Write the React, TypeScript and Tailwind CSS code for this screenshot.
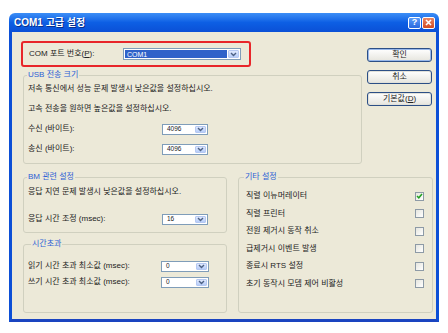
import React from "react";

function Chevron() {
  return (
    <svg width="7" height="5" viewBox="0 0 7 5">
      <path d="M1 1 L3.5 3.5 L6 1" fill="none" stroke="#4d6185" strokeWidth="1.4" />
    </svg>
  );
}

function Combo({ value, w, h = 11, selected = false }: { value: string; w: number; h?: number; selected?: boolean }) {
  return (
    <div
      className="flex items-stretch border border-[#7f9db9] bg-white p-[1px]"
      style={{ width: w, height: h }}
    >
      {selected ? (
        <span className="flex flex-1 items-center bg-[#2f62c9] pl-[2px] text-[7px] leading-none text-white">
          {value}
        </span>
      ) : (
        <span className="flex flex-1 items-center pl-[3px] text-[6.5px] leading-none text-[#222]">{value}</span>
      )}
      <span className="ml-[1px] flex w-[11px] items-center justify-center rounded-[1px] border border-[#b5c8f2] bg-linear-to-b from-[#dfe8fd] to-[#b7cdf8]">
        <Chevron />
      </span>
    </div>
  );
}

function Check({ checked = false }: { checked?: boolean }) {
  return (
    <span className="flex h-[9px] w-[9px] items-center justify-center border border-[#8d9aa6] bg-linear-to-br from-[#e6e6df] to-white">
      {checked && (
        <svg width="7" height="6" viewBox="0 0 7 6">
          <path d="M1 3 L2.8 4.8 L6 1" fill="none" stroke="#21a121" strokeWidth="1.5" />
        </svg>
      )}
    </span>
  );
}

function Btn({ children, def = false }: { children: React.ReactNode; def?: boolean }) {
  return (
    <div
      className={
        "flex h-[14px] w-[65px] items-center justify-center rounded-[3px] border border-[#2c4f86] bg-linear-to-b from-white to-[#e6e5de] text-[8px] leading-none text-[#222] " +
        (def ? "shadow-[inset_0_0_0_1px_#98b8ea]" : "shadow-[inset_0_0_0_1px_#e1e1da]")
      }
    >
      {children}
    </div>
  );
}

function Legend({ children, ml = 0 }: { children: React.ReactNode; ml?: number }) {
  return (
    <legend className="px-[1px] text-[8px] leading-[10px] text-[#2d5fd6]" style={{ marginLeft: ml }}>
      {children}
    </legend>
  );
}

export default function App() {
  return (
    <div className="h-[333px] w-[448px] overflow-hidden bg-white pl-[9px] pt-[13px] font-['Liberation_Sans','Noto_Sans_CJK_KR',sans-serif] text-[8px] text-[#222]">
      <div className="flex h-[309px] w-[430px] flex-col overflow-hidden rounded-t-[6px]">
        {/* Title bar */}
        <div className="flex h-[19px] shrink-0 items-center justify-between bg-linear-to-b from-[#3c8ef6] via-[#0d5fe4] to-[#0b50d6] pl-[5px] pr-[4px]">
          <span className="text-[10px] font-bold leading-none text-white [text-shadow:1px_1px_0_#0a2f8a]">
            COM1 고급 설정
          </span>
          <div className="flex gap-[1px]">
            <span className="flex h-[12px] w-[13px] items-center justify-center rounded-[2px] border border-white bg-linear-to-b from-[#5a9bf8] to-[#2a68e0] text-[9px] font-bold leading-none text-white">
              ?
            </span>
            <span className="flex h-[12px] w-[13px] items-center justify-center rounded-[2px] border border-white bg-linear-to-b from-[#e98463] to-[#d14a20]">
              <svg width="7" height="7" viewBox="0 0 7 7">
                <path d="M1 1 L6 6 M6 1 L1 6" stroke="white" strokeWidth="1.6" />
              </svg>
            </span>
          </div>
        </div>

        {/* Body */}
        <div className="flex flex-1 flex-col border-x-[3px] border-b-[3px] border-x-[#0c4fd6] border-b-[#1a44c0] bg-[#ece9d8] pl-[9px] pt-[9px]">
          {/* Section A */}
          <div className="flex items-start">
            <div className="flex w-[341px] flex-col">
              <div className="flex h-[26px] w-[230px] items-center rounded-[3px] border-2 border-[#e8262a] pl-[6px]">
                <span className="w-[94px]">
                  COM 포트 번호(<span className="underline">P</span>):
                </span>
                <Combo value="COM1" w={118} h={12} selected />
              </div>
              <fieldset className="ml-[2px] mt-[3px] w-[339px] rounded-[3px] border border-[#d0d0bf] pb-[8px] pl-[4px] pt-[3px]">
                <Legend ml={-1}>USB 전송 크기</Legend>
                <div className="flex flex-col gap-[8px]">
                  <div className="h-[12px] leading-[12px]">저속 통신에서 성능 문제 발생시 낮은값을 설정하십시오.</div>
                  <div className="h-[12px] leading-[12px]">고속 전송을 원하면 높은값을 설정하십시오.</div>
                  <div className="flex h-[12px] items-center">
                    <span className="w-[134px]">수신 (바이트):</span>
                    <Combo value="4096" w={46} />
                  </div>
                  <div className="flex h-[12px] items-center">
                    <span className="w-[134px]">송신 (바이트):</span>
                    <Combo value="4096" w={46} />
                  </div>
                </div>
              </fieldset>
            </div>
            <div className="ml-[5px] mt-[7px] flex flex-col gap-[8px]">
              <Btn def>확인</Btn>
              <Btn>취소</Btn>
              <Btn>
                기본값(<span className="underline">D</span>)
              </Btn>
            </div>
          </div>

          {/* Section B */}
          <div className="mt-[8px] flex h-[141px] items-stretch">
            <div className="ml-[2px] flex w-[204px] flex-col">
              <fieldset className="rounded-[3px] border border-[#d0d0bf] pb-[7px] pl-[4px] pt-[4px]">
                <Legend ml={-1}>BM 관련 설정</Legend>
                <div className="h-[12px] leading-[12px]">응답 지연 문제 발생시 낮은값을 설정하십시오.</div>
                <div className="mt-[15px] flex h-[12px] items-center">
                  <span className="w-[134px]">응답 시간 조정 (msec):</span>
                  <Combo value="16" w={46} />
                </div>
              </fieldset>
              <fieldset className="mt-[6px] flex-1 rounded-[3px] border border-[#d0d0bf] pl-[4px] pt-[11px]">
                <Legend ml={3}>시간초과</Legend>
                <div className="flex flex-col gap-[4px]">
                  <div className="flex h-[12px] items-center">
                    <span className="w-[133px]">읽기 시간 초과 최소값 (msec):</span>
                    <Combo value="0" w={48} />
                  </div>
                  <div className="flex h-[12px] items-center">
                    <span className="w-[133px]">쓰기 시간 초과 최소값 (msec):</span>
                    <Combo value="0" w={48} />
                  </div>
                </div>
              </fieldset>
            </div>
            <fieldset className="ml-[11px] w-[195px] rounded-[3px] border border-[#d0d0bf] pl-[7px] pr-[8px] pt-[8px]">
              <Legend ml={-2}>기타 설정</Legend>
              <div className="flex flex-col gap-[5.6px]">
                {[
                  ["직렬 이뉴머레이터", true],
                  ["직렬 프린터", false],
                  ["전원 제거시 동작 취소", false],
                  ["급제거시 이벤트 발생", false],
                  ["종료시 RTS 설정", false],
                  ["초기 동작시 모뎀 제어 비활성", false],
                ].map(([t, c]) => (
                  <div key={t as string} className="flex h-[12px] items-center justify-between">
                    <span>{t as string}</span>
                    <Check checked={c as boolean} />
                  </div>
                ))}
              </div>
            </fieldset>
          </div>
        </div>
      </div>
    </div>
  );
}
